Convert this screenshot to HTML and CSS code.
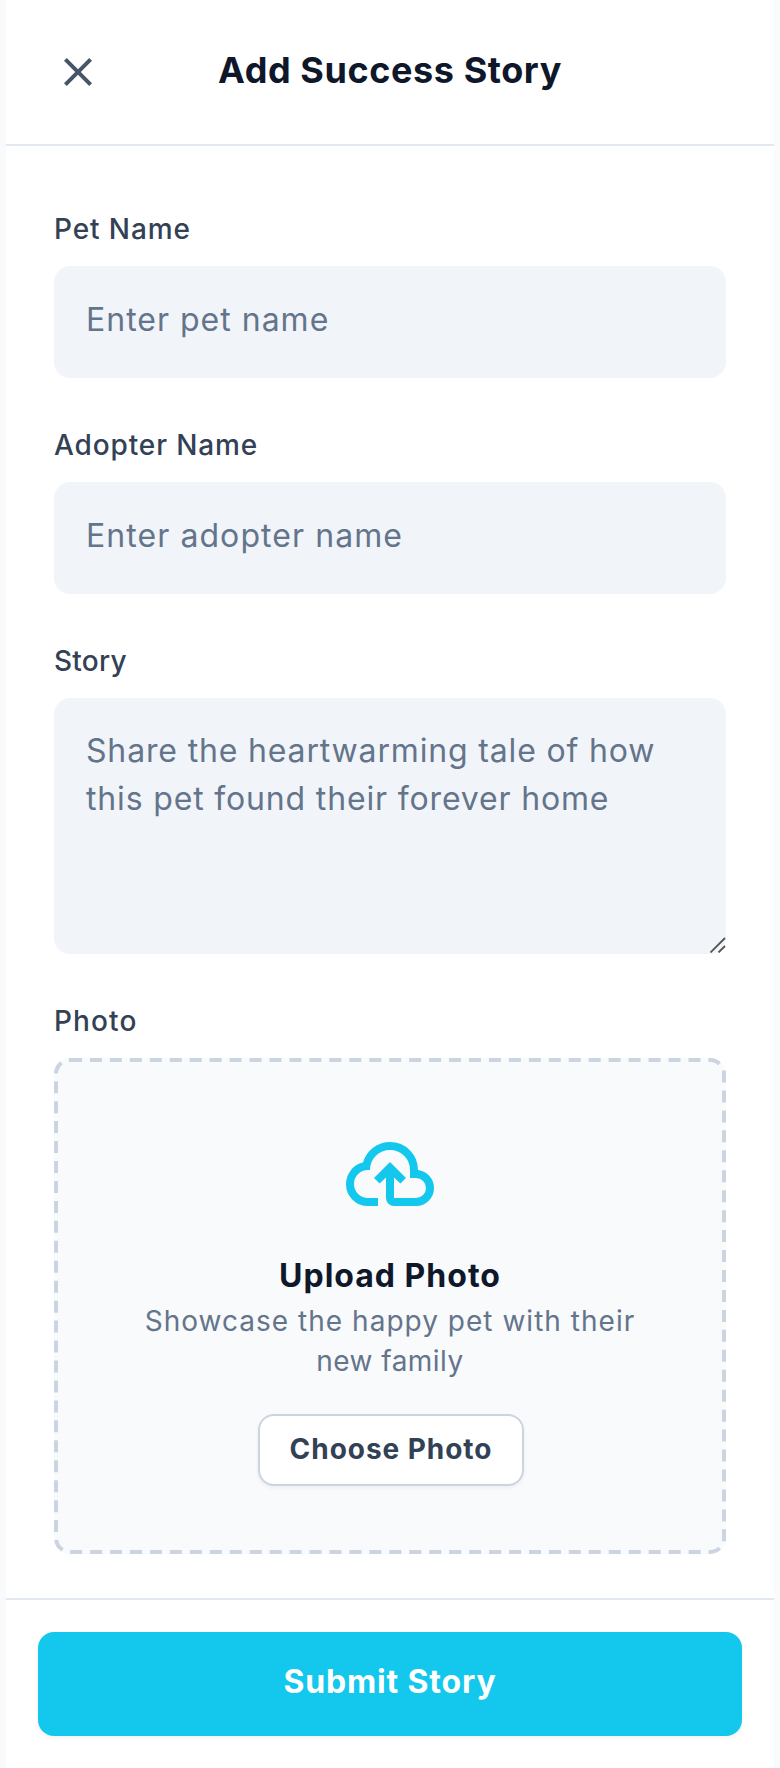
FILE: index.html
```html
<!DOCTYPE html>
<html lang="en">
<head>
<meta charset="utf-8">
<title>Add Success Story</title>
<link rel="stylesheet" href="styles.css">
</head>
<body>
<div class="screen">
  <header class="header">
    <button class="close" type="button" aria-label="Close">
      <svg class="close-icon" viewBox="0 -960 960 960"><path d="m256-200-56-56 224-224-224-224 56-56 224 224 224-224 56 56-224 224 224 224-56 56-224-224-224 224Z"/></svg>
    </button>
    <h1 class="title">Add Success Story</h1>
  </header>
  <main class="form">
    <div class="field">
      <label class="label label-pet" for="pet">Pet Name</label>
      <input class="input input-pet" id="pet" placeholder="Enter pet name">
    </div>
    <div class="field">
      <label class="label label-adopter" for="adopter">Adopter Name</label>
      <input class="input input-adopter" id="adopter" placeholder="Enter adopter name">
    </div>
    <div class="field">
      <label class="label label-story" for="story">Story</label>
      <div class="story-wrap">
        <textarea class="input story" id="story" placeholder="Share the heartwarming tale of how this pet found their forever home"></textarea>
        <svg class="grip" viewBox="0 0 16 16"><path d="M.5 15.5 15 1M8.500 15.5 15 9"/></svg>
      </div>
    </div>
    <div class="field">
      <span class="label label-photo">Photo</span>
      <div class="upload">
        <svg class="dashes" viewBox="0 0 672 496"><rect x="2" y="2" width="668" height="492" rx="14"/></svg>
        <svg class="cloud" viewBox="0 -960 960 960"><path d="M260-160q-91 0-155.500-63T40-377q0-78 47-139t123-78q25-92 100-149t170-57q117 0 198.500 81.500T760-520q69 8 114.500 59.500T920-340q0 75-52.500 127.500T740-160H520q-33 0-56.500-23.500T440-240v-206l-64 62-56-56 160-160 160 160-56 56-64-62v206h220q42 0 71-29t29-71q0-42-29-71t-71-29h-60v-80q0-83-58.500-141.500T480-720q-83 0-141.500 58.500T280-520h-20q-58 0-99 41t-41 99q0 58 41 99t99 41h100v80H260Z"/></svg>
        <h2 class="upload-title">Upload Photo</h2>
        <p class="upload-text">Showcase the happy pet with their <span class="upload-end">new family</span></p>
        <button class="choose" type="button">Choose Photo</button>
      </div>
    </div>
  </main>
  <footer class="footer">
    <button class="submit" type="button">Submit Story</button>
  </footer>
</div>
</body>
</html>
```
FILE: styles.css
```css
* { box-sizing: border-box; margin: 0; }
body {
  background: #f8fafc;
  font-family: Inter, "Liberation Sans", sans-serif;
  color: #0f172a;
}
button, input, textarea { font-family: inherit; border: 0; outline: 0; }
.screen {
  width: 768px;
  height: 1768px;
  margin: 0 auto;
  background: #fff;
  display: flex;
  flex-direction: column;
}
.header {
  height: 146px;
  padding: 0 48px;
  border-bottom: 2px solid #e2e8f0;
  display: flex;
  align-items: center;
}
.close {
  width: 48px;
  height: 48px;
  padding: 0;
  background: none;
}
.close-icon { display: block; width: 48px; height: 48px; fill: #475569; }
.title {
  flex: 1;
  padding: 0 48px 4px 0;
  text-align: center;
  font-size: 36px;
  line-height: 56px;
  font-weight: 700;
  letter-spacing: .58px;
}
.form {
  flex: 1;
  padding: 63px 48px 0;
  display: flex;
  flex-direction: column;
  gap: 47px;
}
.field { display: flex; flex-direction: column; gap: 17px; }
.label {
  font-size: 28px;
  line-height: 40px;
  font-weight: 500;
  color: #334155;
}
.label-pet { letter-spacing: .9px; }
.label-adopter { letter-spacing: .88px; }
.label-story { letter-spacing: .25px; }
.label-photo { letter-spacing: 1.1px; }
.input {
  display: block;
  width: 100%;
  height: 112px;
  padding: 29px 32px 35px;
  border-radius: 16px;
  background: #f1f5f9;
  font-size: 32px;
  line-height: 48px;
}
.input::placeholder { color: #64748b; opacity: 1; }
.input-pet { letter-spacing: 1px; }
.input-adopter { letter-spacing: 1.07px; }
.story-wrap { position: relative; }
.story { height: 256px; resize: none; letter-spacing: .84px; }
.grip {
  position: absolute;
  right: 0;
  bottom: 1px;
  width: 16px;
  height: 16px;
  fill: none;
  stroke: #555;
  stroke-width: 1.8;
}
.upload {
  position: relative;
  height: 496px;
  padding: 68px;
  border-radius: 16px;
  background: #f8fafc;
  display: flex;
  flex-direction: column;
  align-items: center;
  text-align: center;
}
.dashes {
  position: absolute;
  inset: 0;
  width: 100%;
  height: 100%;
  fill: none;
  stroke: #cbd5e1;
  stroke-width: 4;
  stroke-dasharray: 12 7.95;
}
.cloud { width: 96px; height: 96px; fill: #13c8ec; }
.upload-title {
  margin-top: 30px;
  font-size: 32px;
  line-height: 48px;
  font-weight: 700;
  letter-spacing: 1px;
}
.upload-text {
  margin-top: 1px;
  font-size: 28px;
  line-height: 40px;
  letter-spacing: 1.02px;
  color: #64748b;
}
.upload-end { letter-spacing: .45px; }
.choose {
  width: 266px;
  height: 72px;
  margin: 33px 0 0 2px;
  padding: 0 0 2px;
  border: 2px solid #cbd5e1;
  border-radius: 16px;
  background: #fff;
  box-shadow: 0 2px 4px rgba(0, 0, 0, .05);
  font-size: 28px;
  font-weight: 700;
  letter-spacing: .95px;
  color: #334155;
}
.footer {
  padding: 32px;
  border-top: 2px solid #e2e8f0;
}
.submit {
  display: block;
  width: 100%;
  height: 104px;
  padding: 0 0 5px;
  border-radius: 16px;
  background: #13c8ec;
  box-shadow: 0 2px 4px rgba(0, 0, 0, .05);
  font-size: 32px;
  font-weight: 700;
  letter-spacing: .84px;
  color: #fff;
}
```
